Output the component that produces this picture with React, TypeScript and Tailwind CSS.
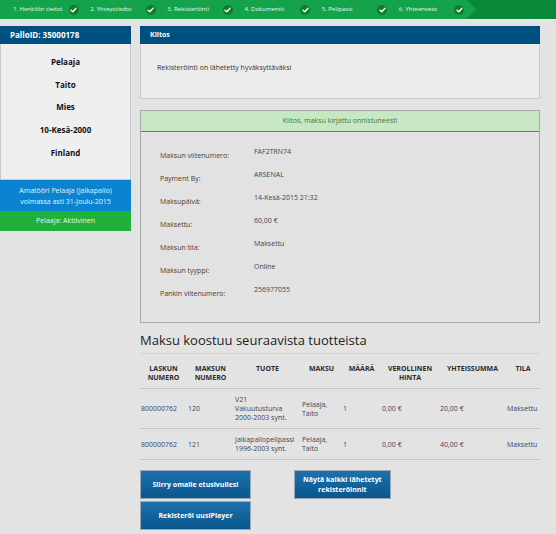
import React from "react";

const steps = [
  "1. Henkilön tiedot",
  "2. Yhteystiedot",
  "3. Rekisteröinti",
  "4. Dokumentit",
  "5. Pelipassi",
  "6. Yhteenveto",
];

const player = ["Pelaaja", "Taito", "Mies", "10-Kesä-2000", "Finland"];

const payment: [string, string][] = [
  ["Maksun viitenumero:", "FAF2TRN74"],
  ["Payment By:", "ARSENAL"],
  ["Maksupäivä:", "14-Kesä-2015 21:32"],
  ["Maksettu:", "60,00 €"],
  ["Maksun tila:", "Maksettu"],
  ["Maksun tyyppi:", "Online"],
  ["Pankin viitenumero:", "256977055"],
];

const cols = "grid grid-cols-[47px_47px_67px_41px_39px_58px_67px_1fr]";

const headers = [
  ["LASKUN", "NUMERO"],
  ["MAKSUN", "NUMERO"],
  ["TUOTE"],
  ["MAKSU"],
  ["MÄÄRÄ"],
  ["VEROLLINEN", "HINTA"],
  ["YHTEISSUMMA"],
  ["TILA"],
];

const rows = [
  {
    laskun: "800000762",
    maksun: "120",
    tuote: ["V21", "Vakuutusturva", "2000-2003 synt."],
    total: "20,00 €",
  },
  {
    laskun: "800000762",
    maksun: "121",
    tuote: ["Jalkapallopelipassi", "1996-2003 synt."],
    total: "40,00 €",
  },
];

function Check() {
  return (
    <span className="flex h-[10px] w-[10px] items-center justify-center rounded-full bg-[#0b7d2c]">
      <svg width="7" height="6" viewBox="0 0 7 6">
        <path
          d="M1 3.2 L2.8 4.8 L6 1.2"
          fill="none"
          stroke="#fff"
          strokeWidth="1.4"
          strokeLinecap="round"
          strokeLinejoin="round"
        />
      </svg>
    </span>
  );
}

function Button({ children }: { children: React.ReactNode }) {
  return (
    <button className="flex h-[29px] items-center justify-center border border-[#9aa7b6] bg-gradient-to-b from-[#1c72ad] to-[#0a568d] px-2 text-center text-[7px] font-bold leading-[10px] text-white">
      {children}
    </button>
  );
}

export default function App() {
  return (
    <div className="min-h-[534px] w-[556px] bg-[#e3e3e3] font-['Open_Sans',sans-serif] text-[7px]">
      {/* Step bar */}
      <div className="flex h-[19px] bg-[#08893a]">
        <div className="flex h-full w-[476px] items-center bg-[#14a34b] pl-[13px] [clip-path:polygon(0_0,467px_0,100%_50%,467px_100%,0_100%)]">
          {steps.map((s) => (
            <div
              key={s}
              className="flex w-[77.6px] items-center justify-between pr-[11.6px]"
            >
              <span className="text-[6px] text-[#e8f7ec]">{s}</span>
              <Check />
            </div>
          ))}
        </div>
      </div>
      <div className="h-px bg-[#ececec]" />

      <div className="flex gap-[9px] pt-[6px]">
        {/* Sidebar */}
        <div className="w-[131px]">
          <div className="flex h-[18px] items-center bg-[#00507f] pl-[10px] text-[8px] font-bold text-white">
            PalloID: 35000178
          </div>
          <div className="flex h-[136px] flex-col items-center border-x border-b border-[#c9c9c9] bg-[#efefef] pt-[7px]">
            {player.map((p) => (
              <div
                key={p}
                className="h-[22.7px] text-[8px] font-bold leading-[22.7px] text-[#111]"
              >
                {p}
              </div>
            ))}
          </div>
          <div className="flex h-[31px] flex-col items-center justify-center bg-[#0a84d0] text-[7px] leading-[11px] text-[#e6f2fb]">
            <div>Amatööri Pelaaja (Jalkapallo)</div>
            <div>voimassa asti 31-Joulu-2015</div>
          </div>
          <div className="flex h-[20px] items-center justify-center bg-[#1fb13a] text-[7px] text-[#e9f8ec]">
            Pelaaja: Aktiivinen
          </div>
        </div>

        {/* Main */}
        <div className="w-[400px]">
          <div className="flex h-[18px] items-center bg-[#00507f] pl-[10px] text-[7px] font-bold text-white">
            Kiitos
          </div>
          <div className="h-[55px] border-x border-b border-[#c9c9c9] bg-[#ececec] pl-[16px] pt-[19px] leading-[10px] text-[#333]">
            Rekisteröinti on lähetetty hyväksyttäväksi
          </div>

          <div className="mt-[11px] border border-[#a9a9a9] bg-[#e2e2e2]">
            <div className="flex h-[21px] items-center justify-center border-b border-[#3e9a3e] bg-[#c8e8c5] text-[#3b7a2c]">
              Kiitos, maksu kirjattu onnistuneesti
            </div>
            <div className="pb-[14px] pt-[15px]">
              {payment.map(([label, value]) => (
                <div key={label} className="flex h-[23px] leading-[10px]">
                  <div className="w-[113px] pl-[19px] pt-[4px] text-[#4b3b30]">
                    {label}
                  </div>
                  <div className="text-[#3d4656]">{value}</div>
                </div>
              ))}
            </div>
          </div>

          <h2 className="mt-[8px] border-b border-[#d4d4d4] pb-[4px] text-[13px] font-normal leading-[18px] text-[#222]">
            Maksu koostuu seuraavista tuotteista
          </h2>

          <div
            className={`${cols} h-[35px] border-b border-[#c6c6c6] pt-[10px] text-[7px] font-bold leading-[9px] text-[#2b2b2b]`}
          >
            {headers.map((h, i) => (
              <div key={i} className="text-center">
                {h.map((l) => (
                  <div key={l}>{l}</div>
                ))}
              </div>
            ))}
          </div>

          {rows.map((r) => (
            <div
              key={r.maksun}
              className={`${cols} items-center border-b border-[#c6c6c6] py-[6px] leading-[9px] text-[#3d4656]`}
            >
              <div className="pl-px">{r.laskun}</div>
              <div className="pl-px">{r.maksun}</div>
              <div className="pl-px">
                {r.tuote.map((t) => (
                  <div key={t}>{t}</div>
                ))}
              </div>
              <div className="pl-px">
                <div>Pelaaja,</div>
                <div>Taito</div>
              </div>
              <div className="pl-px">1</div>
              <div className="pl-px">0,00 €</div>
              <div className="pl-px">{r.total}</div>
              <div className="pl-px">Maksettu</div>
            </div>
          ))}

          <div className="mt-[10px] flex gap-[43px]">
            <div className="flex w-[111px] flex-col gap-[2px]">
              <Button>Siirry omalle etusivullesi</Button>
              <Button>Rekisteröi uusiPlayer</Button>
            </div>
            <div className="w-[113px]">
              <Button>
                Näytä kaikki lähetetyt
                <br />
                rekisteröinnit
              </Button>
            </div>
          </div>
        </div>
      </div>
    </div>
  );
}
